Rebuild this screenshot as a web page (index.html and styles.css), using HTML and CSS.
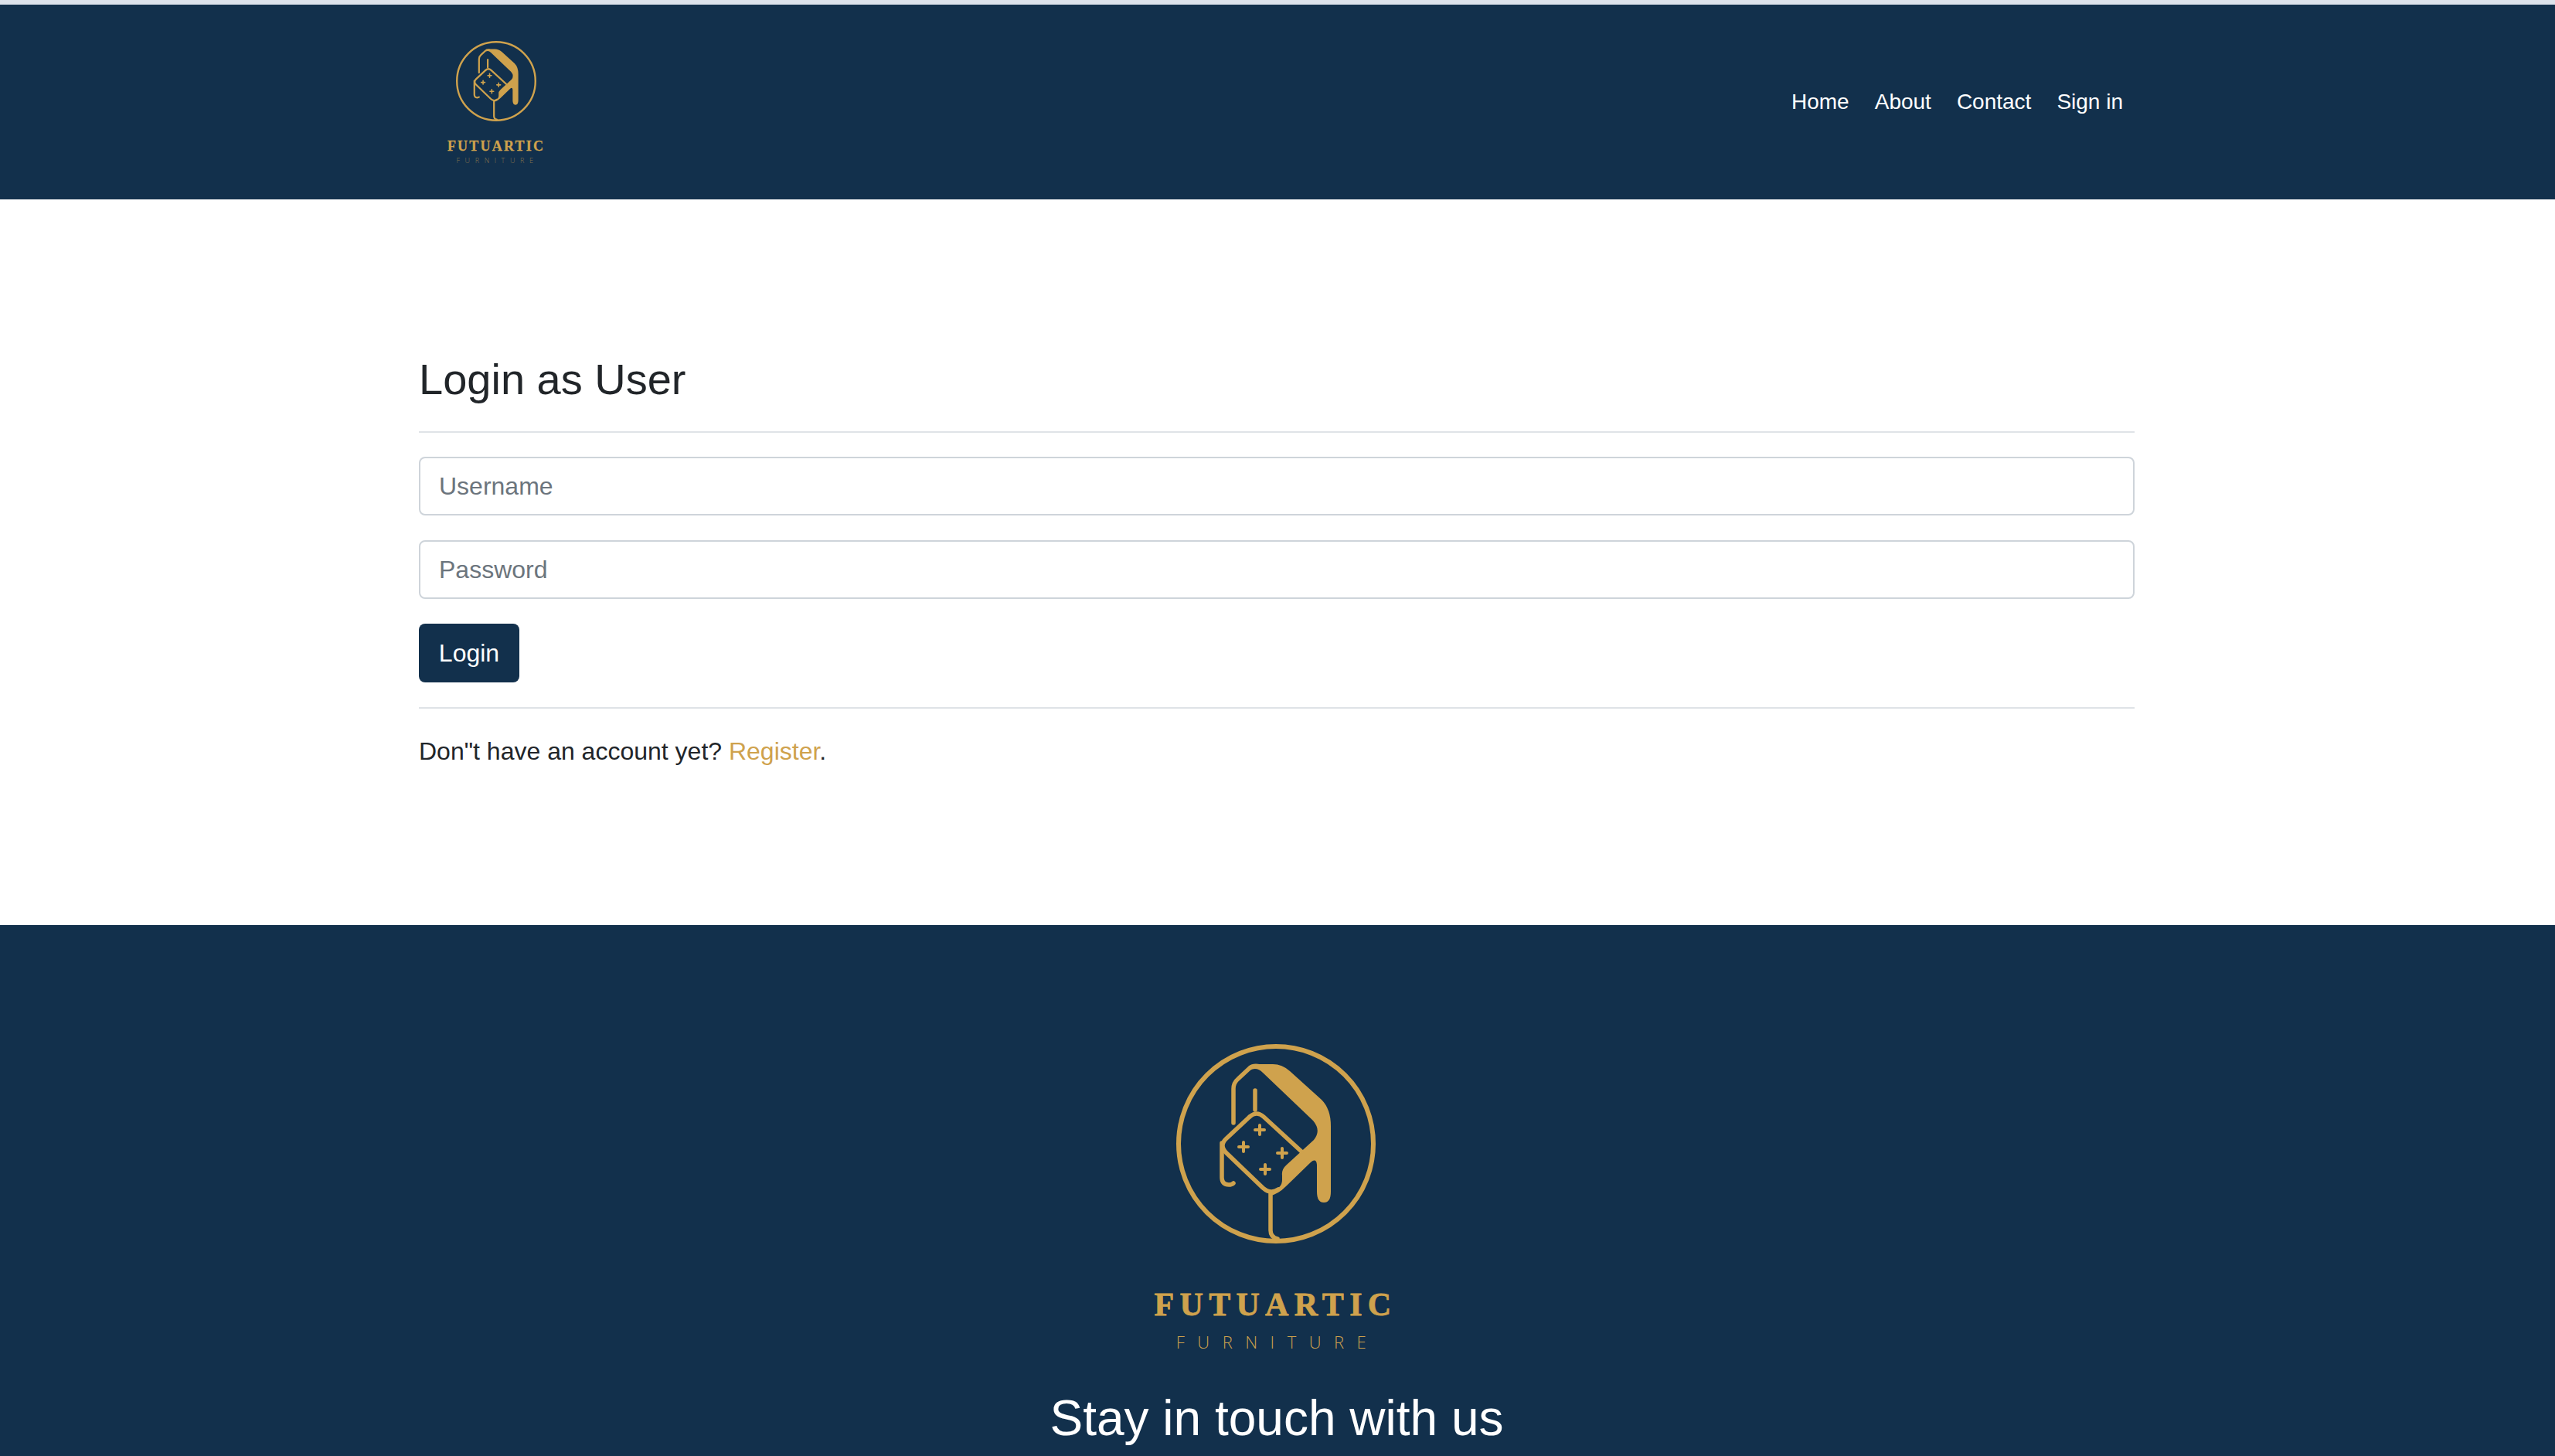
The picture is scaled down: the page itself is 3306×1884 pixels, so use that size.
FILE: index.html
```html
<!DOCTYPE html>
<html>
  <head>
    <meta charset="utf-8">
    <title>Login as User</title>
    <link rel="stylesheet" href="styles.css">
  </head>
  <body>
    <svg class="defs" width="0" height="0">
      <symbol id="mark" viewBox="0 0 258 258">
        <circle class="mark-line" cx="129" cy="129" r="126" stroke-width="6"/>
        <path class="mark-fill" d="M104 26H125Q137 26 147 35L188 72Q200 84 200 106V191Q200 205 191 205Q182 205 182 191V156Q181 147 174 153L142 184Q132 194 122 196L124 190Q137 186 137 176V170Q136 162 143 156L178 124Q188 112 177 99L112 37Q104 29 95 34Z"/>
        <g class="mark-line" stroke-width="5.5">
          <path d="M74 102V58Q74 50 80 45L95 31Q100 27 108 29"/>
          <path d="M102 60V85"/>
          <path d="M95 94Q104 86 113 94L162 139"/>
          <path d="M95 94L65 122Q55 131 65 141L112 186Q122 195 132 188"/>
          <path d="M59 128V172Q59 182 68 182Q72 182 74 180"/>
          <path d="M122 194V241Q122 250 131 252"/>
        </g>
        <g class="mark-line" stroke-width="4">
          <path d="M102 111H114M108 105V117"/>
          <path d="M81 133H93M87 127V139"/>
          <path d="M131 141H143M137 135V147"/>
          <path d="M109 162H121M115 156V168"/>
        </g>
      </symbol>
    </svg>

    <div class="top-strip"></div>

    <header class="site-header">
      <div class="container header-row">
        <a class="brand brand-small" href="#">
          <svg class="brand-mark"><use href="#mark"/></svg>
          <span class="brand-name">FUTUARTIC</span>
          <span class="brand-sub">FURNITURE</span>
        </a>
        <nav class="nav">
          <a href="#">Home</a>
          <a href="#">About</a>
          <a href="#">Contact</a>
          <a href="#">Sign in</a>
        </nav>
      </div>
    </header>

    <main class="container login">
      <h2>Login as User</h2>
      <hr>
      <form>
        <input type="text" placeholder="Username">
        <input type="password" placeholder="Password">
        <button type="button">Login</button>
      </form>
      <hr>
      <p>Don"t have an account yet? <a href="#">Register</a>.</p>
    </main>

    <footer class="site-footer">
      <a class="brand brand-large" href="#">
        <svg class="brand-mark"><use href="#mark"/></svg>
        <span class="brand-name">FUTUARTIC</span>
        <span class="brand-sub">FURNITURE</span>
      </a>
      <h2>Stay in touch with us</h2>
    </footer>
  </body>
</html>
```

FILE: styles.css
```css
html, body {
  margin: 0;
  padding: 0;
  height: 1884px;
  overflow: hidden;
  background: #fff;
  color: #212529;
  font-family: "Liberation Sans", Arial, sans-serif;
  font-size: 32px;
}

a {
  text-decoration: none;
}

.defs {
  display: block;
  height: 0;
}

.container {
  width: 2220px;
  margin: 0 auto;
  padding-right: 2px;
}

.top-strip {
  height: 6px;
  background: #dde3ec;
}

.site-header {
  height: 252px;
  background: #12304c;
}

.header-row {
  display: flex;
  justify-content: space-between;
  align-items: flex-start;
}

.nav {
  display: flex;
  gap: 33px;
  padding: 105px 15px 0 0;
}

.nav a {
  color: #fff;
  font-size: 28px;
  line-height: 42px;
}

/* logo */
.mark-line {
  fill: none;
  stroke: #cfa24d;
  stroke-linecap: round;
  stroke-linejoin: round;
}

.mark-fill {
  fill: #cfa24d;
}

.brand {
  display: flex;
  flex-direction: column;
  align-items: center;
  color: #cfa24d;
}

.brand-name {
  font-family: "Liberation Serif", serif;
  font-weight: 700;
  white-space: nowrap;
}

.brand-sub {
  font-family: "Open Sans", sans-serif;
  font-weight: 300;
  white-space: nowrap;
}

.brand-small {
  margin: 47px 0 0 37px;
  width: 126px;
}

.brand-small .brand-mark {
  width: 104px;
  height: 104px;
}

.brand-small .brand-name {
  margin-top: 23px;
  font-size: 18px;
  line-height: 18px;
  letter-spacing: 2.2px;
  -webkit-text-stroke: .3px #cfa24d;
}

.brand-small .brand-sub {
  margin: 4px 0 0 3px;
  font-size: 9px;
  line-height: 12px;
  letter-spacing: 6.6px;
  opacity: .6;
}

.brand-large {
  width: 320px;
  margin: 0 auto;
  padding-right: 3px;
}

.brand-large .brand-mark {
  width: 258px;
  height: 258px;
}

.brand-large .brand-name {
  margin-top: 58px;
  font-size: 42px;
  line-height: 42px;
  letter-spacing: 7.3px;
  -webkit-text-stroke: .8px #cfa24d;
}

.brand-large .brand-sub {
  margin: 12px 0 0 5px;
  font-size: 22px;
  line-height: 30px;
  letter-spacing: 16.5px;
}

/* login form */
.login {
  height: 939px;
}

.login h2 {
  margin: 0;
  padding-top: 199px;
  font-size: 56px;
  font-weight: 400;
  line-height: 67px;
}

.login hr {
  height: 2px;
  margin: 0;
  border: 0;
  background: #dfe3e7;
}

.login h2 + hr {
  margin-top: 34px;
}

.login form {
  display: flex;
  flex-direction: column;
  align-items: flex-start;
  gap: 32px;
  padding: 31px 0 32px;
}

.login input {
  box-sizing: border-box;
  width: 100%;
  height: 76px;
  padding: 0 24px;
  border: 2px solid #ced4da;
  border-radius: 8px;
  outline: 0;
  font: inherit;
}

.login input::placeholder {
  color: #6c757d;
  opacity: 1;
}

.login button {
  width: 130px;
  height: 76px;
  padding: 0;
  border: 0;
  border-radius: 8px;
  background: #12304c;
  color: #fff;
  font: inherit;
}

.login p {
  margin: 31px 0 0;
  line-height: 48px;
}

.login p a {
  color: #cfa24d;
}

/* footer */
.site-footer {
  height: 687px;
  padding: 154px 2px 0 0;
  box-sizing: border-box;
  background: #12304c;
  color: #fff;
  text-align: center;
}

.site-footer h2 {
  margin: 46px 0 0;
  font-size: 64px;
  font-weight: 400;
  line-height: 77px;
}
```
